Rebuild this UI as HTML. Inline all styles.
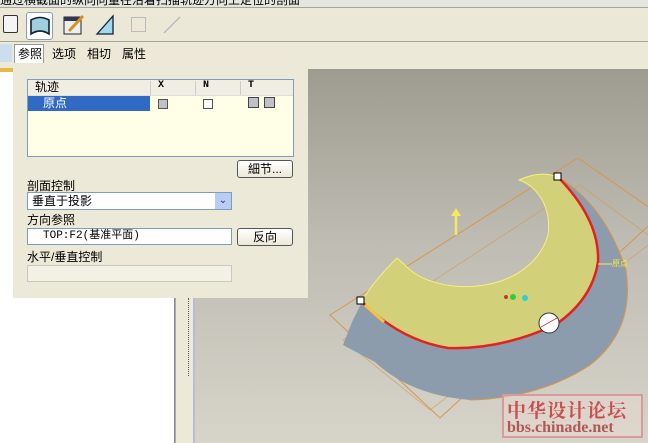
<!DOCTYPE html>
<html><head><meta charset="utf-8"><style>
*{margin:0;padding:0;box-sizing:border-box}
body{width:648px;height:443px;overflow:hidden;position:relative;background:#ece9d8;font-family:"Liberation Sans","Noto Sans CJK SC",sans-serif;font-size:12px;color:#000}
.a{position:absolute}
.t{font-family:"Liberation Sans","Noto Sans CJK SC",sans-serif;font-size:12px;white-space:nowrap}
.btn{position:absolute;border:1px solid #555;border-radius:3px;background:linear-gradient(#fff,#ece9d8);text-align:center;line-height:16px}
</style></head><body>
<div class="a" style="left:0;top:0;width:648px;height:8px;background:#e4e6e0;border-bottom:1px solid #a8a496"></div>
<div class="a t" style="left:0;top:-9px;font-size:12px;color:#000">通过横截面的纵向向量在沿着扫描轨迹方向上定位的剖面</div>
<div class="a" style="left:0;top:9px;width:648px;height:33px;background:#ebe8d8;border-bottom:1px solid #a8a496"></div>
<div class="a" style="left:3px;top:15px;width:15px;height:18px;border:1px solid #333;background:#f4f4f4;border-radius:2px"></div>
<div class="a" style="left:26px;top:12px;width:27px;height:28px;border:1px solid #8b9ab8;border-radius:3px;background:#fff"></div>
<svg class="a" style="left:29px;top:15px" width="22" height="22"><path d="M2 5 Q11 0 20 5 V19 Q11 13 2 19 Z" fill="#9fd0df" stroke="#123" stroke-width="1.6"/></svg>
<svg class="a" style="left:63px;top:14px" width="22" height="22"><rect x="1" y="3" width="17" height="17" fill="#eee" stroke="#223"/><rect x="1" y="3" width="17" height="4" fill="#335"/><path d="M6 17 L20 2" stroke="#d89020" stroke-width="3"/></svg>
<svg class="a" style="left:95px;top:14px" width="22" height="22"><path d="M2 20 L18 2 V20 Z" fill="#9fd8ef" stroke="#123" stroke-width="1.3"/></svg>
<div class="a" style="left:131px;top:17px;width:15px;height:15px;border:1px solid #bbb"></div>
<svg class="a" style="left:162px;top:15px" width="20" height="20"><path d="M2 18 L18 2" stroke="#bbb" stroke-width="1.5"/></svg>
<div class="a" style="left:0;top:44px;width:12px;height:18px;background:#cde"></div>
<div class="a t" style="left:14px;top:44px;width:30px;height:19px;border:1px solid #999;border-bottom:none;background:#fff;padding-left:3px;line-height:18px">参照</div>
<div class="a t" style="left:52px;top:45px;line-height:18px">选项</div>
<div class="a t" style="left:87px;top:45px;line-height:18px">相切</div>
<div class="a t" style="left:122px;top:45px;line-height:18px">属性</div>
<div class="a" style="left:0;top:68px;width:175px;height:375px;background:#fff;border-right:1px solid #888"></div>
<div class="a" style="left:0;top:68px;width:13px;height:4px;background:#e4b84a"></div>
<div class="a" style="left:175px;top:68px;width:20px;height:375px;background:#ece9d8;border-left:1px solid #aab;border-right:2px solid #b8bcd4"></div>
<div class="a" style="left:188px;top:298px;width:1px;height:78px;border-left:1px dotted #556"></div>
<div class="a" style="left:195px;top:69px;width:453px;height:374px;background:linear-gradient(#9e9b90,#bebcb2 45%,#d7d4ca)"></div>
<svg class="a" style="left:0;top:0" width="648" height="443">
<path d="M330 315 L578 158 L660 215 L440 418 Z" fill="none" stroke="#d8954a" stroke-width="1"/>
<path d="M343 340 L580 185 L655 240 L430 410 Z" fill="none" stroke="#d8954a" stroke-width="0.8" opacity=".7"/>
<path d="M558 177 Q605 205 626 270 Q635 330 590 365 Q540 398 470 400 Q410 395 375 362 L343 345 L352 322 L362 302 Q400 340 448 348 Q500 350 555 325 Q592 300 598 262 Q600 220 558 177 Z" fill="#8d9cac"/>
<path d="M558 177 Q605 205 626 270 Q635 330 590 365 Q540 398 470 400" fill="none" stroke="#d8954a" stroke-width="1"/>
<path d="M558 177 Q600 220 598 262 Q592 300 555 325 Q500 350 448 348 Q400 340 362 302 Q370 285 397 258 L408 268 C440 298 530 295 548 235 C552 205 535 185 519 180 Q540 170 558 177 Z" fill="#d3d07a" stroke="#f4ef80" stroke-width="1"/>
<path d="M558 177 Q600 220 598 262 Q592 300 555 325 Q500 350 448 348 Q400 340 362 302" fill="none" stroke="#e42020" stroke-width="2.5"/>
<rect x="554" y="173" width="7" height="7" fill="#fff" stroke="#000"/>
<rect x="357" y="297" width="7" height="7" fill="#fff" stroke="#000"/>
<path d="M456 235 V212" stroke="#f8e860" stroke-width="2.5"/><path d="M451 216 L456 208 L461 216 Z" fill="#f8e860"/>
<path d="M365 305 L384 322" stroke="#f8c040" stroke-width="3"/>
<path d="M598 264 H612" stroke="#f8e860"/>
<text x="612" y="266" font-size="8" fill="#f4e840" font-family="Noto Sans CJK SC">原点</text>
<circle cx="549" cy="323" r="10" fill="#fff" stroke="#333"/><path d="M541 327 L557 318" stroke="#c44"/>
<circle cx="506" cy="297" r="2" fill="#c33"/><circle cx="513" cy="297" r="3" fill="#3c3"/><circle cx="525" cy="298" r="3" fill="#3cc"/>
</svg>
<div class="a" style="left:502px;top:394px;width:141px;height:44px;border:2px solid #d89a9a;background:rgba(230,215,205,.55)"></div>
<div class="a" style="left:507px;top:396px;font-family:'Noto Serif CJK SC',serif;font-size:19px;font-weight:bold;color:#c85050;letter-spacing:1px">中华设计论坛</div>
<div class="a" style="left:507px;top:419px;font-family:'Liberation Serif',serif;font-size:16px;font-weight:bold;color:#b05858">bbs.chinade.net</div>
<div class="a" style="left:13px;top:68px;width:295px;height:230px;background:#ece9d8"></div>
<div class="a" style="left:27px;top:79px;width:267px;height:78px;background:#fffee6;border:1px solid #7f9db9"></div>
<div class="a" style="left:28px;top:80px;width:265px;height:16px;background:#f0eee2;border-bottom:1px solid #ddd"></div>
<div class="a t" style="left:35px;top:80px;line-height:15px">轨迹</div>
<div class="a" style="left:150px;top:81px;height:14px;border-left:1px solid #ccc"></div>
<div class="a" style="left:195px;top:81px;height:14px;border-left:1px solid #ccc"></div>
<div class="a" style="left:240px;top:81px;height:14px;border-left:1px solid #ccc"></div>
<div class="a" style="left:158px;top:80px;font-family:'Liberation Mono',monospace;font-size:10px;font-weight:bold">X</div>
<div class="a" style="left:203px;top:80px;font-family:'Liberation Mono',monospace;font-size:10px;font-weight:bold">N</div>
<div class="a" style="left:248px;top:80px;font-family:'Liberation Mono',monospace;font-size:10px;font-weight:bold">T</div>
<div class="a" style="left:28px;top:96px;width:122px;height:15px;background:#316ac5"></div>
<div class="a t" style="left:43px;top:96px;line-height:14px;color:#fff">原点</div>
<div class="a" style="left:158px;top:99px;width:10px;height:10px;background:#c0c0c8;border:1px solid #555"></div>
<div class="a" style="left:203px;top:99px;width:10px;height:10px;background:#fff;border:1px solid #555"></div>
<div class="a" style="left:248px;top:97px;width:11px;height:11px;background:#c0c0c8;border:1px solid #444"></div>
<div class="a" style="left:264px;top:97px;width:11px;height:11px;background:#c0c0c8;border:1px solid #444"></div>
<div class="btn t" style="left:237px;top:160px;width:56px;height:18px">細节...</div>
<div class="a t" style="left:27px;top:177px">剖面控制</div>
<div class="a" style="left:27px;top:192px;width:205px;height:18px;background:#fff;border:1px solid #7f9db9"></div>
<div class="a t" style="left:32px;top:193px;line-height:16px">垂直于投影</div>
<div class="a" style="left:215px;top:193px;width:16px;height:16px;background:#b8cdf4;color:#335;font-size:10px;text-align:center;line-height:16px">⌄</div>
<div class="a t" style="left:27px;top:211px">方向参照</div>
<div class="a" style="left:27px;top:228px;width:205px;height:17px;background:#fff;border:1px solid #7f9db9"></div>
<div class="a" style="left:43px;top:229px;font-family:'Liberation Mono','Noto Sans CJK SC',monospace;font-size:11px;line-height:15px">TOP:F2(基准平面)</div>
<div class="btn t" style="left:237px;top:228px;width:56px;height:18px">反向</div>
<div class="a t" style="left:27px;top:248px">水平/垂直控制</div>
<div class="a" style="left:27px;top:265px;width:205px;height:17px;background:#f3f1e6;border:1px solid #cac8bb"></div>
</body></html>
